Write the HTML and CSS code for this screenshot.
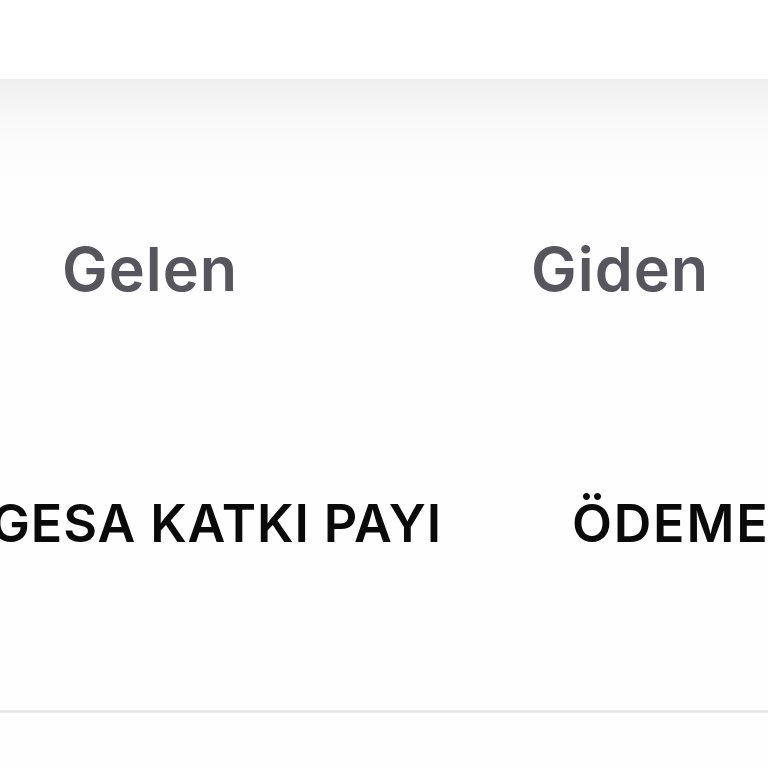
FILE: index.html
```html
<!DOCTYPE html>
<html lang="tr">
<head>
<meta charset="utf-8">
<link rel="stylesheet" href="styles.css">
</head>
<body>
<div class="top"></div>
<div class="panel">
  <div class="tabs">
    <div class="tab">Gelen</div>
    <div class="tab">Giden</div>
  </div>
  <div class="items">
    <div class="item first">GESA KATKI PAYI</div>
    <div class="item second">ÖDEME</div>
  </div>
</div>
<div class="divider"></div>
</body>
</html>
```
FILE: styles.css
```css
html, body {
  margin: 0;
  padding: 0;
  width: 768px;
  height: 768px;
  overflow: hidden;
  background: #fefefe;
  font-family: Inter, "Noto Sans", sans-serif;
}
.top {
  height: 79px;
  background: #ffffff;
}
.panel {
  height: 631px;
  background: linear-gradient(to bottom, #efefef 0px, #f7f7f7 35px, #fcfcfc 70px, #fefefe 110px);
  display: flex;
  flex-direction: column;
}
.tabs {
  display: flex;
  padding-top: 150px;
  padding-left: 62px;
}
.tab {
  width: 469px;
  flex: none;
  font-size: 61px;
  font-weight: 600;
  color: #57555e;
  line-height: 80px;
  letter-spacing: 1px;
}
.items {
  display: flex;
  margin-top: 180px;
  margin-left: -9px;
}
.item {
  flex: none;
  white-space: nowrap;
  font-size: 52px;
  font-weight: 600;
  color: #0a0a0a;
  line-height: 70px;
  letter-spacing: 0.9px;
}
.item.first {
  width: 581px;
}
.item.second {
  letter-spacing: 1.8px;
}
.divider {
  height: 3px;
  background: linear-gradient(to bottom, #f0f0f0, #e4e4e4, #f0f0f0);
}
```
